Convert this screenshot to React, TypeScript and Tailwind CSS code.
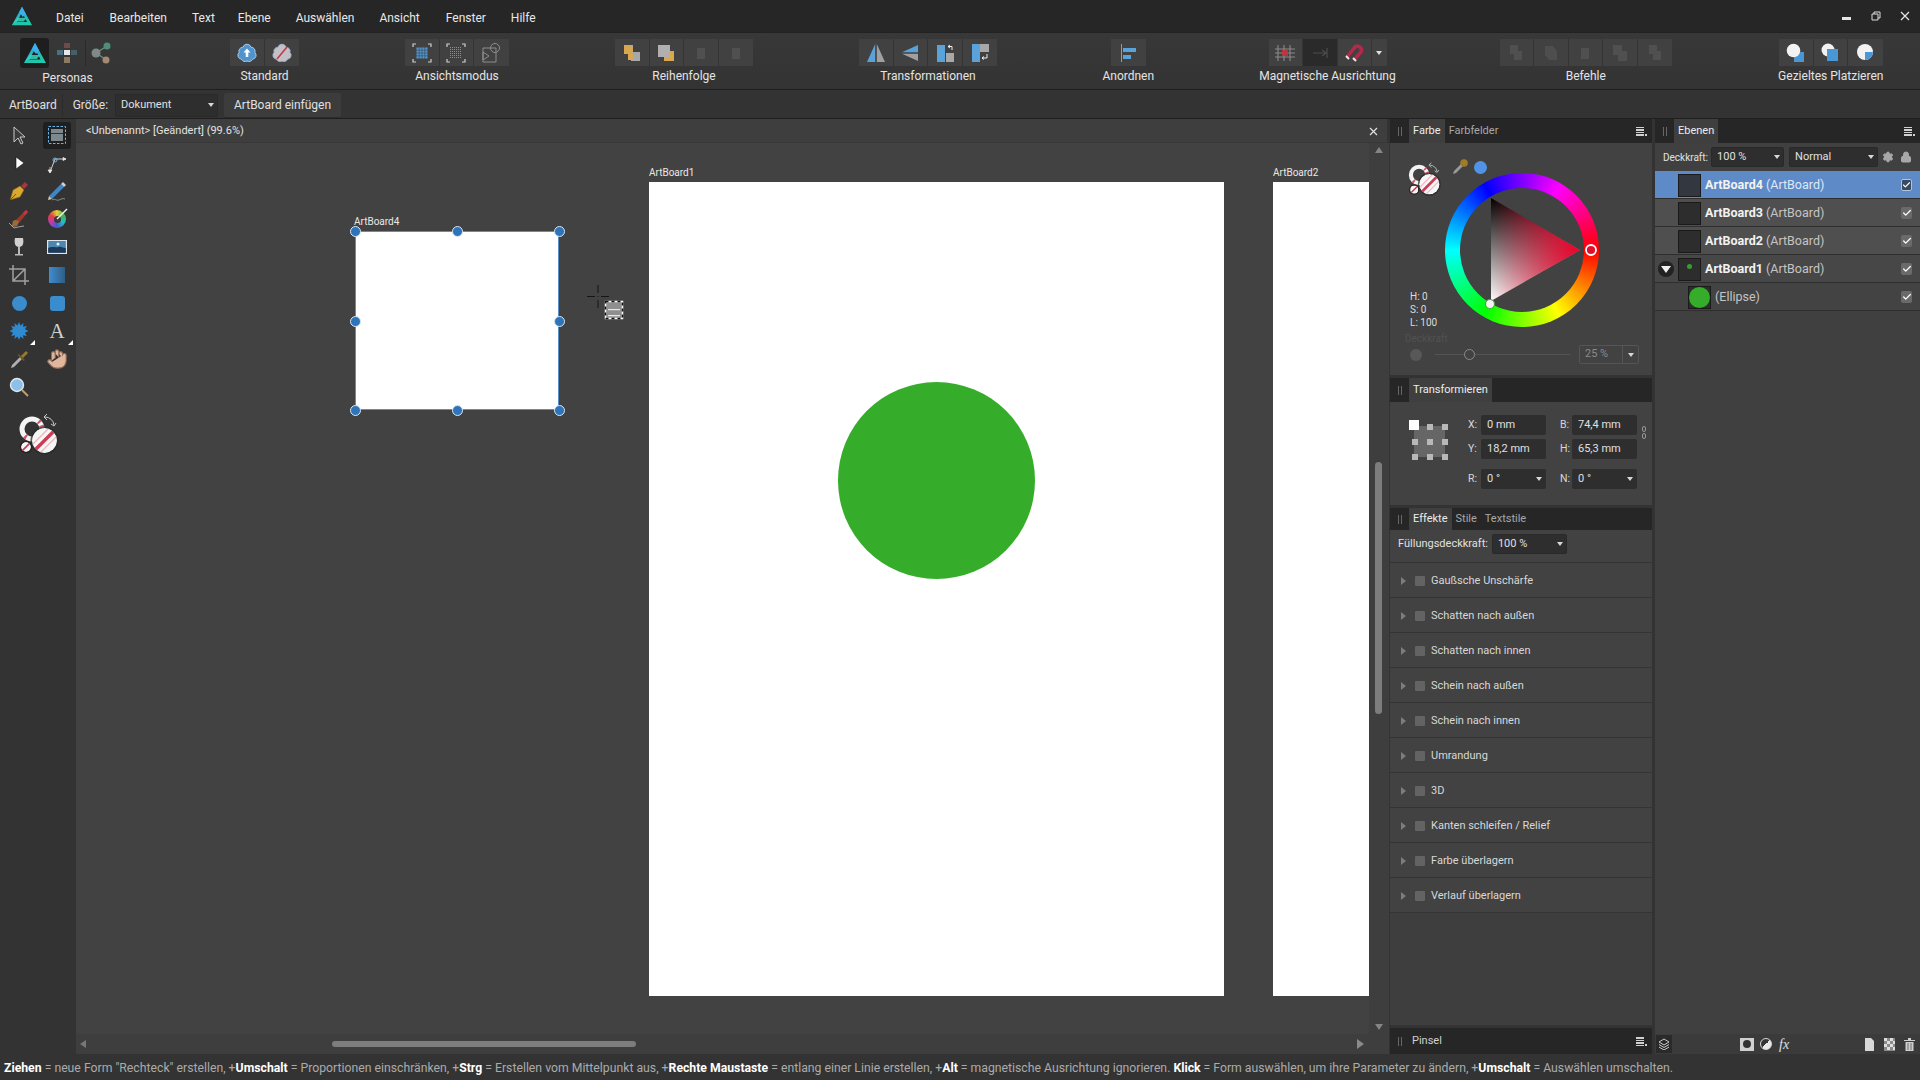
import React from "react";
import { Hand, Settings, Lock, Check } from "lucide-react";

const S = ({ w = 22, h = 22, vb, children, className = "" }: { w?: number; h?: number; vb?: string; children: React.ReactNode; className?: string }) => (
  <svg width={w} height={h} viewBox={vb ?? `0 0 ${w} ${h}`} className={"block shrink-0 " + className}>
    {children}
  </svg>
);

const Logo = ({ size = 24 }: { size?: number }) => (
  <S w={size} h={size} vb="0 0 24 24">
    <defs>
      <linearGradient id="lg" x1="0" y1="0" x2="0.3" y2="1">
        <stop offset="0" stopColor="#2f9de0" />
        <stop offset="1" stopColor="#1fc8a8" />
      </linearGradient>
    </defs>
    <path d="M12 2 L23 22 H1 Z M12 8 L6.5 18.5 H17.5 Z" fill="url(#lg)" fillRule="evenodd" />
    <path d="M1 22 L7 14 H17 L14 18 H6 Z" fill="#36d6c0" opacity="0.85" />
    <path d="M12 2 L16 9.5 L13 13 L9 8 Z" fill="#3ab0ee" />
  </S>
);

const Flower = ({ fill, stroke, children }: { fill: string; stroke: string; children: React.ReactNode }) => (
  <S>
    <path d="M11 2.2a4 4 0 0 1 3.9 3 4 4 0 0 1 4 5.2 4 4 0 0 1-2.3 6.8 4 4 0 0 1-5.6 1.8 4 4 0 0 1-5.6-1.8 4 4 0 0 1-2.3-6.8 4 4 0 0 1 4-5.2 4 4 0 0 1 3.9-3z" fill={fill} stroke={stroke} strokeWidth="1" />
    {children}
  </S>
);

const dotsGrid = (x0: number, y0: number, n: number, step: number, sz: number, c: string) => {
  const out: React.ReactNode[] = [];
  for (let i = 0; i < n; i++)
    for (let j = 0; j < n; j++)
      out.push(<rect key={`${i}-${j}`} x={x0 + i * step} y={y0 + j * step} width={sz} height={sz} fill={c} />);
  return out;
};

const Brackets = () => (
  <path d="M2 5V2H5 M17 2H20V5 M20 17V20H17 M5 20H2V17" fill="none" stroke="#cfcfcf" strokeWidth="1.2" />
);

const Faint = ({ kind = 0 }: { kind?: number }) => (
  <S>
    {kind === 0 && <rect x="7" y="6" width="8" height="11" fill="#505050" />}
    {kind === 1 && <path d="M5 3h8v9h-8z M9 9h8v9h-8z" fill="#505050" />}
    {kind === 2 && <path d="M5 4h8l4 5v9H9l-4-5z" fill="#4e4e4e" />}
    {kind === 3 && <path d="M4 3h9v6h5v10H9v-6H4z" fill="#505050" />}
  </S>
);

const Btn = ({ children, className = "bg-[#414141]", w = "w-[34.5px]" }: { children?: React.ReactNode; className?: string; w?: string }) => (
  <div className={`${w} h-[27px] flex items-center justify-center border-r border-[#343434] last:border-r-0 ${className}`}>{children}</div>
);

const Group = ({ w, ml, label, children }: { w: string; ml: string; label: string; children: React.ReactNode }) => (
  <div className={`${w} ${ml} flex flex-col items-center shrink-0`}>
    <div className="flex h-[27px] mt-[6px] w-full">{children}</div>
    <div className="mt-[2px] h-[16px] leading-[16px] whitespace-nowrap text-[12px] text-[#e4e4e4]">{label}</div>
  </div>
);

const PlaceIcon = ({ v }: { v: number }) => (
  <S>
    {v === 0 && (
      <>
        <rect x="9" y="10" width="10" height="10" fill="#4a97d6" />
        <circle cx="8.5" cy="8.5" r="6.8" fill="#f2f2f2" />
      </>
    )}
    {v === 1 && (
      <>
        <circle cx="9" cy="8" r="6.5" fill="#f2f2f2" />
        <rect x="8" y="7" width="11" height="12" fill="#4a97d6" />
      </>
    )}
    {v === 2 && (
      <>
        <circle cx="11" cy="10" r="8" fill="#f2f2f2" />
        <path d="M11 10h8a8 8 0 0 1-8 8z" fill="#4a97d6" />
      </>
    )}
  </S>
);

const Toolbar = () => (
  <div className="h-[57px] shrink-0 flex bg-gradient-to-b from-[#383838] to-[#333333] border-b border-[#1f1f1f]">
    <div className="w-[95px] ml-[20px] shrink-0 flex flex-col items-center">
      <div className="flex items-center h-[30px] mt-[5px] w-full">
        <div className="w-[30px] h-[30px] rounded-[3px] bg-[#1e1e1e] flex items-center justify-center">
          <Logo size={24} />
        </div>
        <div className="w-[36px] flex justify-center">
          <S>
            <rect x="8" y="1" width="6" height="5" fill="#6f4a4a" />
            <rect x="1" y="8" width="6" height="5" fill="#4a7180" />
            <rect x="8" y="8" width="6" height="5" fill="#e8e8e8" />
            <rect x="15" y="8" width="6" height="5" fill="#46606a" />
            <rect x="8" y="15" width="6" height="6" fill="#8c7a62" />
          </S>
        </div>
        <div className="w-[1px] h-[26px] bg-[#2a2a2a]" />
        <div className="w-[28px] ml-[2px] flex justify-center">
          <S>
            <path d="M6 11L17 4M6 11L15 17" stroke="#6e8f85" strokeWidth="1.2" />
            <circle cx="6" cy="11" r="4.5" fill="#7d8a88" />
            <circle cx="17" cy="4" r="3.5" fill="#4f8f7a" />
            <circle cx="16" cy="18" r="3.5" fill="#a08a72" />
          </S>
        </div>
      </div>
      <div className="mt-[2px] h-[16px] leading-[16px] text-[12px] text-[#e4e4e4]">Personas</div>
    </div>
    <Group w="w-[69px]" ml="ml-[115px]" label="Standard">
      <Btn>
        <Flower fill="#4f93cf" stroke="#a9cde8">
          <path d="M11 6.5l3.5 4h-2.2v4.5h-2.6v-4.5H7.500z" fill="#fff" />
        </Flower>
      </Btn>
      <Btn>
        <Flower fill="#c4c0c8" stroke="#9fb4c8">
          <path d="M6 17L16 5" stroke="#c23a4c" strokeWidth="1.6" />
        </Flower>
      </Btn>
    </Group>
    <Group w="w-[104px]" ml="ml-[106px]" label="Ansichtsmodus">
      <Btn>
        <S>
          <Brackets />
          {dotsGrid(5.5, 5.5, 4, 2.9, 2.3, "#4f98d8")}
        </S>
      </Btn>
      <Btn>
        <S>
          <Brackets />
          {dotsGrid(5, 5, 6, 2, 1, "#5a9ccf")}
        </S>
      </Btn>
      <Btn>
        <S>
          <path d="M3 6h13v14H3z M3 10l6 4-6 4z" fill="none" stroke="#8e8e8e" strokeWidth="1" />
          <circle cx="15" cy="6" r="4.5" fill="none" stroke="#8e8e8e" strokeWidth="1" />
        </S>
      </Btn>
    </Group>
    <Group w="w-[138px]" ml="ml-[106px]" label="Reihenfolge">
      <Btn>
        <S>
          <rect x="3" y="3" width="9" height="9" fill="#d8a850" />
          <rect x="10" y="10" width="9" height="9" fill="#a8a8a8" />
          <rect x="10" y="3" width="2" height="2" fill="#a8a8a8" />
          <rect x="7" y="12" width="5" height="6" fill="#d8a850" />
        </S>
      </Btn>
      <Btn>
        <S>
          <rect x="9" y="9" width="10" height="10" fill="#d8a850" />
          <rect x="3" y="3" width="12" height="12" fill="#b0b0b0" />
        </S>
      </Btn>
      <Btn><Faint /></Btn>
      <Btn><Faint /></Btn>
    </Group>
    <Group w="w-[138px]" ml="ml-[106px]" label="Transformationen">
      <Btn>
        <S>
          <path d="M10.200 2V20H2z" fill="#5aa3da" />
          <path d="M11.800 2V20H20z" fill="#a0a0a0" />
        </S>
      </Btn>
      <Btn>
        <S>
          <path d="M19 3V10.300H3z" fill="#5aa3da" />
          <path d="M19 19V11.700H3z" fill="#a0a0a0" />
        </S>
      </Btn>
      <Btn>
        <S>
          <rect x="3" y="3" width="8" height="17" fill="#5aa3da" />
          <rect x="12" y="11" width="8" height="9" fill="#a8a8a8" />
          <path d="M18 8V4.500H14M14 4.500l2-1.500M14 4.500l2 1.500" fill="none" stroke="#fff" strokeWidth="0.9" />
        </S>
      </Btn>
      <Btn>
        <S>
          <path d="M3 2h8v18H3z" fill="#5aa3da" />
          <path d="M11 2h9v8h-9z" fill="#a8a8a8" />
          <path d="M18 12v4h-5M13 16l2-1.500M13 16l2 1.500" fill="none" stroke="#fff" strokeWidth="0.9" />
        </S>
      </Btn>
    </Group>
    <Group w="w-[34.500px]" ml="ml-[114px]" label="Anordnen">
      <Btn>
        <S>
          <rect x="4" y="2" width="1" height="18" fill="#9a9a9a" />
          <rect x="6" y="6" width="13" height="4" fill="#5aa3da" />
          <rect x="6" y="13" width="8" height="4" fill="#5aa3da" />
        </S>
      </Btn>
    </Group>
    <Group w="w-[118px]" ml="ml-[123px]" label="Magnetische Ausrichtung">
      <Btn>
        <S>
          <path d="M4 3v16M10 3v16M16 3v16M1 7h20M1 11h20M1 15h20" stroke="#8a8a8a" strokeWidth="1.100" />
          <rect x="8" y="8" width="6" height="6" fill="#c8303c" opacity="0.9" />
        </S>
      </Btn>
      <Btn className="bg-[#2a2a2a]">
        <S>
          <path d="M4 11h13M13 8l4 3-4 3M18 6v10" fill="none" stroke="#4c4c4c" strokeWidth="1.200" />
        </S>
      </Btn>
      <Btn>
        <S>
          <path d="M4 15L12 5a4 4 0 0 1 6 5l-7 8" fill="none" stroke="#b02a4a" strokeWidth="3.600" />
          <path d="M3 14l3 3M10 16l3 3" stroke="#e8e8e8" strokeWidth="2" />
        </S>
      </Btn>
      <Btn w="w-[14.500px]">
        <div className="w-0 h-0 border-l-[3.500px] border-r-[3.500px] border-t-[4px] border-l-transparent border-r-transparent border-t-[#e0e0e0]" />
      </Btn>
    </Group>
    <Group w="w-[172.500px]" ml="ml-[113px]" label="Befehle">
      <Btn><Faint kind={1} /></Btn>
      <Btn><Faint kind={2} /></Btn>
      <Btn><Faint kind={0} /></Btn>
      <Btn><Faint kind={3} /></Btn>
      <Btn><Faint kind={1} /></Btn>
    </Group>
    <Group w="w-[103.500px]" ml="ml-[107px]" label="Gezieltes Platzieren">
      <Btn><PlaceIcon v={0} /></Btn>
      <Btn><PlaceIcon v={1} /></Btn>
      <Btn><PlaceIcon v={2} /></Btn>
    </Group>
  </div>
);

const Caret = () => (
  <div className="w-0 h-0 border-l-[3px] border-r-[3px] border-t-[4px] border-l-transparent border-r-transparent border-t-[#d8d8d8]" />
);

const Drop = ({ w, v, className = "h-[20px]", color = "text-[#e0e0e0]" }: { w: string; v: string; className?: string; color?: string }) => (
  <div className={`${w} ${className} bg-[#2e2e2e] rounded-[2px] border border-[#292929] flex items-center justify-between pl-[5px] pr-[3px] text-[11px] shrink-0 ${color}`}>
    <span>{v}</span>
    <Caret />
  </div>
);

const ContextBar = () => (
  <div className="h-[29px] shrink-0 bg-[#333333] flex items-center pt-[2px] border-b border-[#1f1f1f] text-[12px] text-[#e0e0e0]">
    <span className="ml-[9px]">ArtBoard</span>
    <div className="w-[1px] h-[22px] bg-[#2b2b2b] ml-[5px]" />
    <span className="ml-[10px]">Größe:</span>
    <Drop w="w-[103px]" v="Dokument" className="h-[23px] ml-[7px]" />
    <div className="w-[117px] h-[25px] ml-[6px] bg-[#3c3c3c] rounded-[2px] border-b border-[#2c2c2c] flex items-center justify-center">ArtBoard einfügen</div>
  </div>
);

const Stroke = ({ size, id }: { size: number; id: string }) => (
  <S w={size} h={size} vb="0 0 44 44">
    <defs>
      <clipPath id={id + "a"}><circle cx="28.500" cy="28.500" r="12.500" /></clipPath>
      <clipPath id={id + "b"}><circle cx="10" cy="35" r="5" /></clipPath>
    </defs>
    <circle cx="16" cy="17" r="10" fill="none" stroke="#f4f4f4" strokeWidth="5" />
    <circle cx="16" cy="17" r="10" fill="none" stroke="#c9566c" strokeWidth="5" strokeDasharray="2 3 2 3 2 60" transform="rotate(-50 16 17)" />
    <circle cx="16" cy="17" r="10" fill="none" stroke="#c9566c" strokeWidth="5" strokeDasharray="2 60" transform="rotate(125 16 17)" />
    <circle cx="28.500" cy="28.500" r="14" fill="#2b2b2b" opacity="0.75" />
    <g clipPath={`url(#${id}a)`}>
      <circle cx="28.500" cy="28.500" r="12.500" fill="#f6f6f6" />
      <path d="M14 43L43 14" stroke="#cc3c56" strokeWidth="3.400" />
      <path d="M14 35L36 13M22 43L44 21" stroke="#eeb8c2" strokeWidth="1.400" />
    </g>
    <circle cx="10" cy="35" r="6.200" fill="#222" />
    <g clipPath={`url(#${id}b)`}>
      <circle cx="10" cy="35" r="5" fill="#f6f6f6" />
      <path d="M4 41L16 29" stroke="#cc3c56" strokeWidth="1.800" />
    </g>
    <path d="M29 5a9 9 0 0 1 9 8M31 2l-3 3 3 3M35 12l3 2 2-3" fill="none" stroke="#c8c8c8" strokeWidth="1" />
  </S>
);

const toolArrow = (fill: string, stroke: string) => (
  <S>
    <path d="M6 3v15l4-4 3 6 2-1-3-6h5z" fill={fill} stroke={stroke} strokeWidth="1" />
  </S>
);

const Tri = () => (
  <div className="absolute right-[-5px] bottom-[-3px] w-0 h-0 border-b-[5px] border-l-[5px] border-b-white border-l-transparent" />
);

const Tools = () => {
  const rows: [React.ReactNode, React.ReactNode][] = [
    [
      toolArrow("#3a3a3a", "#c8c8c8"),
      <div className="w-[28px] h-[27px] bg-[#1f1f1f] rounded-[3px] flex items-center justify-center">
        <S w={20} h={20}>
          <rect x="4" y="4" width="12" height="12" fill="#7c8a90" />
          <rect x="4" y="8" width="12" height="1" fill="#333" />
          <rect x="1.500" y="1.500" width="17" height="17" fill="none" stroke="#6db3e4" strokeWidth="1" strokeDasharray="2.500 1.500" />
        </S>
      </div>,
    ],
    [
      <S w={18} h={18}><path d="M6 3v12l8-6z" fill="#fff" stroke="#111" strokeWidth="0.6" /></S>,
      <S>
        <path d="M4 20L9 7M9 7H20" stroke="#cfcfcf" strokeWidth="1" fill="none" />
        <circle cx="9" cy="8" r="2" fill="none" stroke="#6db3e4" />
        <path d="M4 15v6M20 7l-3-1.500v3z M4 21l-2-3h4z" fill="#e8e8e8" stroke="#e8e8e8" strokeWidth="0.7" />
      </S>,
    ],
    [
      <S>
        <path d="M2 20l3-10 7-4 4 4-4 7z" fill="#d8a830" stroke="#7a5c18" strokeWidth="0.6" />
        <path d="M2 20l6-6" stroke="#5a4410" strokeWidth="0.8" />
        <path d="M13 6l4-4 3 3-4 4z" fill="#b0313f" />
      </S>,
      <S>
        <path d="M3 16L15 4l3 3L6 19z" fill="#3f86c4" />
        <path d="M15 4l2-2 3 3-2 2z" fill="#d0d0d0" />
        <path d="M3 16l-1 4 4-1z" fill="#e2c9a2" />
        <path d="M6 20c3-2 4 1 7 0s3-2 6-1" fill="none" stroke="#a0a0a0" strokeWidth="0.8" />
      </S>,
    ],
    [
      <S>
        <path d="M8 12L18 2l2 2-9 11z" fill="#9c3a2a" />
        <path d="M18 2l2 2-3 3-2-2z" fill="#c8324a" />
        <path d="M5 13c2-2 5-1 6 1l-2 4c-2 1-5 1-6 0 2-1 1-3 2-5z" fill="#9a6a3c" />
        <path d="M1 15l5 5 4-1 6-1" fill="none" stroke="#bdbdbd" strokeWidth="0.8" />
      </S>,
      <div className="relative w-[18px] h-[18px] rounded-full bg-[conic-gradient(#e8d03a,#3ab84a,#30b8c8,#3a5ed0,#c03ab0,#e04040,#e8d03a)] flex items-center justify-center">
        <div className="w-[7px] h-[7px] rounded-full bg-[#3a3a3a]" />
        <svg width="12" height="12" viewBox="0 0 12 12" className="absolute right-[-2px] top-[-2px]">
          <path d="M1 11L11 1" stroke="#f2f2f2" strokeWidth="1.400" />
        </svg>
      </div>,
    ],
    [
      <S>
        <path d="M7 2h8c1 5 0 9-4 9S6 7 7 2z" fill="#d0d0d0" />
        <rect x="10" y="11" width="2" height="7" fill="#b8b8b8" />
        <rect x="7" y="18" width="8" height="1.500" fill="#b8b8b8" />
      </S>,
      <S>
        <rect x="1" y="4" width="20" height="14" fill="#dfe6ea" />
        <rect x="2.200" y="5" width="17.600" height="11.800" fill="#4d86b0" />
        <path d="M2.200 16.800L2.200 12c4-2 7 0 10-1s5 1 7.600 1v4.800z" fill="#1e3a58" />
        <circle cx="12" cy="8" r="1.500" fill="#e8eef2" />
      </S>,
    ],
    [
      <S>
        <path d="M5 1v16h16M1 5h16v16M5 17L17 5" fill="none" stroke="#a0a0a0" strokeWidth="1.500" />
      </S>,
      <div className="w-[16px] h-[16px] bg-gradient-to-r from-[#3f8ed0] to-[#2f5e84]" />,
    ],
    [
      <div className="w-[15px] h-[15px] rounded-full bg-[#3b8ccc]" />,
      <div className="w-[15px] h-[15px] rounded-[3px] bg-[#3b8ccc]" />,
    ],
    [
      <div className="relative">
        <S>
          <path d="M11 2l1.500 3.500L15.500 3l-.500 3.800 3.800-.800-1.800 3.300 3.500 1.700-3.500 1.700 1.800 3.300-3.800-.800.500 3.800-3-2.500L11 20l-1.500-3.500-3 2.500.500-3.800-3.800.800 1.800-3.300L1.500 11 5 9.300 3.200 6 7 6.800 6.500 3l3 2.500z" fill="#2f8ad0" />
        </S>
        <Tri />
      </div>,
      <div className="relative w-[22px] flex justify-center">
        <span className="text-[21px] leading-[22px] text-[#cfcfcf] font-['Liberation_Serif',serif]">A</span>
        <Tri />
      </div>,
    ],
    [
      <S>
        <path d="M3 20l1-3 9-9 2 2-9 9z" fill="#b0b0b0" />
        <path d="M13 8l5-5 2 2-5 5z" fill="#9a7a28" />
        <path d="M11 6l6 6-1.500 1-6-6z" fill="#6a5420" />
      </S>,
      <Hand size={22} strokeWidth={1.200} color="#8c6a58" fill="#e2b69c" />,
    ],
    [
      <S>
        <circle cx="9" cy="9" r="6.500" fill="#8cc0e8" stroke="#dfe8ee" strokeWidth="1.400" />
        <path d="M14 14l6 6" stroke="#c8a058" strokeWidth="2" />
      </S>,
      null,
    ],
  ];
  return (
    <div className="w-[76px] shrink-0 bg-[#333333] flex flex-col pt-[1px]">
      {rows.map((r, i) => (
        <div key={i} className={`flex ${i === 0 ? "h-[28px] mt-[1px]" : "h-[28px]"}`}>
          <div className="w-[38px] flex items-center justify-center">{r[0]}</div>
          <div className="w-[38px] flex items-center justify-center">{r[1]}</div>
        </div>
      ))}
      <div className="mt-[11px] ml-[16px]">
        <Stroke size={44} id="st1" />
      </div>
    </div>
  );
};

const Handle = ({ cls }: { cls: string }) => (
  <div className={`absolute w-[11px] h-[11px] rounded-full bg-[#2f74b8] border-[1.500px] border-[#d8e8f6] ${cls}`} />
);

const Canvas = () => (
  <div className="flex-1 flex flex-col min-w-0">
    <div className="h-[24px] shrink-0 bg-[#3e3e3e] mr-[2px] flex items-center justify-between pt-[2px] pl-[10px] pr-[9px] text-[11px] text-[#e2e2e2] border-b border-[#383838]">
      <span>&lt;Unbenannt&gt; [Geändert] (99.6%)</span>
      <svg width="9" height="9" viewBox="0 0 9 9" className="block"><path d="M1 1l7 7M8 1L1 8" stroke="#e0e0e0" strokeWidth="1.200" /></svg>
    </div>
    <div className="flex flex-1 min-h-0">
      <div className="flex-1 flex flex-col min-w-0">
        <div className="relative flex-1 bg-[#424242] overflow-hidden">
          <div className="absolute left-[278px] top-[72px] text-[10px] leading-[14px] text-[#e8e8e8]">ArtBoard4</div>
          <div className="absolute left-[573px] top-[23px] text-[10px] leading-[14px] text-[#e8e8e8]">ArtBoard1</div>
          <div className="absolute left-[1197px] top-[23px] text-[10px] leading-[14px] text-[#e8e8e8]">ArtBoard2</div>
          <div className="absolute left-[573px] top-[39px] w-[575px] h-[814px] bg-white flex items-start justify-center">
            <div className="w-[197px] h-[197px] rounded-full bg-[#35ad2a] mt-[200px]" />
          </div>
          <div className="absolute left-[1197px] top-[39px] w-[97px] h-[814px] bg-white" />
          <div className="absolute left-[279px] top-[88px] w-[204px] h-[179px] bg-white border-[1.500px] border-[#5b8fc4]">
            <Handle cls="left-[-6.500px] top-[-6.500px]" />
            <Handle cls="left-[96px] top-[-6.500px]" />
            <Handle cls="right-[-6.500px] top-[-6.500px]" />
            <Handle cls="left-[-6.500px] top-[84px]" />
            <Handle cls="right-[-6.500px] top-[84px]" />
            <Handle cls="left-[-6.500px] bottom-[-6.500px]" />
            <Handle cls="left-[96px] bottom-[-6.500px]" />
            <Handle cls="right-[-6.500px] bottom-[-6.500px]" />
          </div>
          <svg width="44" height="42" viewBox="0 0 44 42" className="absolute left-[511px] top-[142px]">
            <path d="M11 0v8M11 11v1M11 15v8M0 11.500h8M14 11.500h8" stroke="#111" strokeWidth="0.900" />
            <rect x="18.500" y="16.500" width="17" height="17" fill="#8f8f8f" stroke="#fff" strokeWidth="1.500" />
            <rect x="18.500" y="16.500" width="17" height="17" fill="none" stroke="#111" strokeWidth="1.500" strokeDasharray="3 3" />
            <rect x="21" y="24" width="12" height="1.200" fill="#e8e8e8" />
            <rect x="21" y="30" width="12" height="1.200" fill="#e8e8e8" />
          </svg>
        </div>
        <div className="h-[20px] shrink-0 bg-[#3e3e3e] flex items-center">
          <div className="ml-[4px] w-0 h-0 border-y-[4px] border-r-[6px] border-y-transparent border-r-[#787878]" />
          <div className="ml-[246px] w-[304px] h-[6px] rounded-full bg-[#7d7d7d]" />
          <div className="ml-auto mr-[5px] w-0 h-0 border-y-[5px] border-l-[7px] border-y-transparent border-l-[#8a8a8a]" />
        </div>
      </div>
      <div className="w-[20px] shrink-0 bg-[#3e3e3e] flex flex-col items-center relative pr-[1px] pt-[4px]">
        <div className="w-0 h-0 border-x-[4px] border-b-[6px] border-x-transparent border-b-[#858585]" />
        <div className="mt-[309px] w-[7px] h-[252px] rounded-full bg-[#7d7d7d]" />
        <div className="mt-[310px] w-0 h-0 border-x-[4px] border-t-[6px] border-x-transparent border-t-[#858585]" />
      </div>
    </div>
  </div>
);

const PanelMenu = () => (
  <div className="flex items-end gap-[1px]">
    <div className="flex flex-col gap-[1px]">
      <div className="w-[8px] h-[1.500px] bg-[#d0d0d0]" />
      <div className="w-[8px] h-[1.500px] bg-[#d0d0d0]" />
      <div className="w-[8px] h-[1.500px] bg-[#d0d0d0]" />
      <div className="w-[8px] h-[1.500px] bg-[#d0d0d0]" />
    </div>
    <div className="w-[2px] h-[2px] bg-[#d0d0d0]" />
  </div>
);

const Grip = () => (
  <div className="w-[19px] shrink-0 flex justify-center gap-[2px]">
    <div className="w-[1px] h-[9px] bg-[#666]" />
    <div className="w-[1px] h-[9px] bg-[#666]" />
  </div>
);

const TabStrip = ({ tabs, menu = true, h = "h-[24px]" }: { tabs: string[]; menu?: boolean; h?: string }) => (
  <div className={`${h} shrink-0 bg-[#262626] flex items-center pr-[5px] text-[11px]`}>
    <Grip />
    {tabs.map((t, i) => (
      <div key={t} className={`h-full flex items-center px-[4px] ${i === 0 ? "bg-[#3f3f3f] text-[#ececec]" : "text-[#a8a8a8]"}`}>
        {t}
      </div>
    ))}
    {menu && <div className="ml-auto"><PanelMenu /></div>}
  </div>
);

const Farbe = () => (
  <div className="h-[256px] shrink-0 bg-[#424242] flex flex-col">
    <TabStrip tabs={["Farbe", "Farbfelder"]} />
    <div className="relative h-[189px] flex">
      <div className="w-[52px] ml-[16px] shrink-0">
        <div className="mt-[18px]"><Stroke size={36} id="st2" /></div>
        <div className="mt-[93px] ml-[4px] flex flex-col text-[10px] leading-[13px] text-[#dcdcdc]">
          <span>H: 0</span>
          <span>S: 0</span>
          <span>L: 100</span>
        </div>
      </div>
      <div className="relative w-[154px] h-[154px] mt-[30px] -ml-[13px] rounded-full bg-[conic-gradient(from_90deg,#ff0000,#ffff00,#00ff00,#00ffff,#0000ff,#ff00ff,#ff0000)] flex items-center justify-center shrink-0">
        <div className="w-[124px] h-[124px] rounded-full bg-[#424242]" />
        <svg width="154" height="154" viewBox="0 0 154 154" className="absolute left-0 top-0">
          <defs>
            <linearGradient id="tv" x1="0" y1="0" x2="0" y2="1">
              <stop offset="0" stopColor="#000" />
              <stop offset="1" stopColor="#fff" />
            </linearGradient>
            <linearGradient id="th" x1="1" y1="0" x2="0" y2="0">
              <stop offset="0" stopColor="#f0002a" />
              <stop offset="1" stopColor="#f0002a" stopOpacity="0" />
            </linearGradient>
          </defs>
          <path d="M46 25V128L135 77z" fill="url(#tv)" />
          <path d="M46 25V128L135 77z" fill="url(#th)" />
          <circle cx="146" cy="77" r="5" fill="#e0102c" stroke="#fff" strokeWidth="1.800" />
          <circle cx="45" cy="131" r="4.500" fill="#f4f4f4" stroke="#5a9a4a" strokeWidth="1.200" />
        </svg>
      </div>
      <div className="absolute left-[61px] top-[15px]">
        <S w={18} h={18}>
          <path d="M2 16l1-3 7-7 2 2-7 7z" fill="#9a9a9a" />
          <circle cx="13" cy="5" r="3.800" fill="#a07c28" />
        </S>
      </div>
      <div className="absolute left-[84px] top-[18px] w-[13px] h-[13px] rounded-full bg-[#4f94e8]" />
    </div>
    <div className="h-[13px] ml-[15px] text-[10px] leading-[13px] text-[#515151]">Deckkraft</div>
    <div className="h-[19px] flex items-center pl-[20px]">
      <div className="w-[12px] h-[12px] rounded-full bg-[#585858]" />
      <div className="relative ml-[13px] w-[135px] h-[1px] bg-[#545454]">
        <div className="absolute left-[29px] top-[-5px] w-[11px] h-[11px] rounded-full border border-[#8a8a8a] bg-[#424242]" />
      </div>
      <div className="ml-[9px] w-[60px] h-[19px] border border-[#555] rounded-[2px] flex items-center text-[11px] text-[#8a8a8a]">
        <span className="w-[43px] pl-[5px] border-r border-[#555]">25 %</span>
        <div className="flex-1 flex justify-center"><Caret /></div>
      </div>
    </div>
  </div>
);

const Field = ({ l, v, w = "w-[65px]", drop = false, lw = "w-[13px]" }: { l: string; v: string; w?: string; drop?: boolean; lw?: string }) => (
  <div className="flex items-center">
    <span className={`${lw} text-[10.500px] text-[#d8d8d8] shrink-0`}>{l}</span>
    <div className={`${w} h-[20px] bg-[#2e2e2e] rounded-[2px] flex items-center justify-between pl-[6px] pr-[4px] text-[11px] text-[#e0e0e0]`}>
      <span>{v}</span>
      {drop && <Caret />}
    </div>
  </div>
);

const Anchor = () => {
  const pts: [number, number][] = [];
  [0, 15, 30].forEach((y) => [0, 15, 30].forEach((x) => pts.push([x, y])));
  return (
    <S w={42} h={42}>
      <rect x="5" y="6" width="31" height="31" fill="#666" />
      {pts.map(([x, y], i) =>
        i === 0 ? (
          <rect key={i} x="0" y="0" width="10" height="10" fill="#fff" />
        ) : (
          <rect key={i} x={x + 3} y={y + 4} width="6" height="6" fill="#b8b8b8" />
        )
      )}
    </S>
  );
};

const Transform = () => (
  <div className="h-[127px] shrink-0 bg-[#424242] flex flex-col">
    <TabStrip tabs={["Transformieren"]} menu={false} />
    <div className="flex">
      <div className="ml-[19px] mt-[18px]"><Anchor /></div>
      <div className="ml-[17px] mt-[13px] flex flex-col">
        <div className="flex gap-[14px]">
          <Field l="X:" v="0 mm" />
          <Field l="B:" v="74,4 mm" lw="w-[12px]" />
        </div>
        <div className="flex gap-[14px] mt-[4px]">
          <Field l="Y:" v="18,2 mm" />
          <Field l="H:" v="65,3 mm" lw="w-[12px]" />
        </div>
        <div className="flex gap-[14px] mt-[10px]">
          <Field l="R:" v="0 °" drop />
          <Field l="N:" v="0 °" drop lw="w-[12px]" />
        </div>
      </div>
      <div className="ml-[5px] mt-[24px] flex flex-col gap-[1px]">
        <div className="w-[4px] h-[6px] rounded-[2px] border border-[#999]" />
        <div className="w-[4px] h-[6px] rounded-[2px] border border-[#999]" />
      </div>
    </div>
  </div>
);

const effects = ["Gaußsche Unschärfe", "Schatten nach außen", "Schatten nach innen", "Schein nach außen", "Schein nach innen", "Umrandung", "3D", "Kanten schleifen / Relief", "Farbe überlagern", "Verlauf überlagern"];

const Effekte = () => (
  <div className="flex-1 min-h-0 bg-[#424242] flex flex-col">
    <TabStrip tabs={["Effekte", "Stile", "Textstile"]} menu={false} h="h-[22px]" />
    <div className="h-[33px] shrink-0 flex items-center pl-[8px] pb-[4px] border-b border-[#343434] text-[11px] text-[#e0e0e0]">
      <span>Füllungsdeckkraft:</span>
      <Drop w="w-[75px]" v="100 %" className="h-[20px] ml-[4px]" />
    </div>
    {effects.map((e) => (
      <div key={e} className="h-[35px] shrink-0 flex items-center pt-[2px] border-b border-[#343434] text-[11px] text-[#d8d8d8]">
        <div className="ml-[11px] w-0 h-0 border-y-[4px] border-l-[5px] border-y-transparent border-l-[#7d7d7d]" />
        <div className="ml-[9px] w-[10px] h-[10px] bg-[#636363] rounded-[1px]" />
        <span className="ml-[6px]">{e}</span>
      </div>
    ))}
    <div className="flex-1 bg-[#3e3e3e]" />
  </div>
);

const Pinsel = () => (
  <div className="h-[26px] shrink-0 bg-[#262626] flex items-center pt-[1px] pr-[5px] text-[11px] text-[#d0d0d0]">
    <Grip />
    <span className="ml-[3px]">Pinsel</span>
    <div className="ml-auto"><PanelMenu /></div>
  </div>
);

const Layer = ({ name, type, sel, bg, thumb, toggle, indent }: { name?: string; type: string; sel?: boolean; bg: string; thumb?: React.ReactNode; toggle?: boolean; indent?: boolean }) => (
  <div className={`h-[28px] shrink-0 flex items-center pt-[1px] border-b border-[#2e2e2e] ${bg}`}>
    <div className={`${indent ? "w-[33px]" : "w-[23px]"} shrink-0 flex justify-center`}>
      {toggle && (
        <div className="w-[16px] h-[16px] ml-[-2px] rounded-full bg-[#222] flex items-center justify-center">
          <div className="w-0 h-0 mt-[1px] border-x-[5px] border-t-[7px] border-x-transparent border-t-[#f0f0f0]" />
        </div>
      )}
    </div>
    <div className={`w-[23px] h-[23px] border border-[#1a1a1a] flex items-center justify-center ${sel ? "bg-[#33373f]" : "bg-[#2d2d2d]"}`}>{thumb}</div>
    <span className="ml-[4px] mt-[1px] text-[12.500px] whitespace-nowrap">
      {name && <b className="font-bold text-[#f2f2f2]">{name} </b>}
      <span className={sel ? "text-[#dbe8f8]" : "text-[#c4c4c4]"}>{type}</span>
    </span>
    <div className={`ml-auto mr-[8px] w-[11px] h-[12px] rounded-[2px] flex items-center justify-center ${sel ? "bg-[#3a4a60] border border-[#b0c4dc]" : "bg-[#6a6a6a]"}`}>
      <Check size={10} strokeWidth={3} color="#fff" />
    </div>
  </div>
);

const Ebenen = () => (
  <div className="w-[265px] shrink-0 bg-[#404040] flex flex-col">
    <TabStrip tabs={["Ebenen"]} />
    <div className="h-[28px] shrink-0 flex items-center pl-[8px] text-[10px] text-[#e0e0e0]">
      <span>Deckkraft:</span>
      <Drop w="w-[73px]" v="100 %" className="h-[20px] ml-[3px]" />
      <Drop w="w-[89px]" v="Normal" className="h-[20px] ml-[5px]" />
      <div className="ml-[4px]"><Settings size={12} color="#a8a8a8" fill="#a8a8a8" /></div>
      <div className="ml-[6px]"><Lock size={12} color="#a8a8a8" fill="#a8a8a8" /></div>
    </div>
    <div className="flex flex-col flex-1">
      <Layer sel name="ArtBoard4" type="(ArtBoard)" bg="bg-[#5e8ac8]" />
      <Layer name="ArtBoard3" type="(ArtBoard)" bg="bg-[#4f4f4f]" />
      <Layer name="ArtBoard2" type="(ArtBoard)" bg="bg-[#4f4f4f]" />
      <Layer toggle name="ArtBoard1" type="(ArtBoard)" bg="bg-[#474747]" thumb={<div className="w-[5px] h-[5px] rounded-full bg-[#3c9a32] mb-[6px]" />} />
      <Layer indent type="(Ellipse)" bg="bg-[#434343]" thumb={<div className="w-[21px] h-[21px] rounded-full bg-[#35ad2a]" />} />
    </div>
    <div className="h-[20px] shrink-0 bg-[#3b3b3b] flex items-center">
      <div className="w-[16px] h-[18px] ml-[1px] bg-[#2a2a2a] flex items-center justify-center">
        <S w={12} h={12}><path d="M6 1l5 3-5 3-5-3zM1 6.500l5 3 5-3M1 9l5 3 5-3" fill="none" stroke="#c8c8c8" strokeWidth="1" /></S>
      </div>
      <div className="ml-[68px] w-[14px] h-[13px] bg-[#d0d0d0] flex items-center justify-center">
        <div className="w-[8px] h-[8px] rounded-full bg-[#333]" />
      </div>
      <div className="ml-[6px] w-[12px] h-[12px] rounded-full border border-[#d8d8d8] bg-[linear-gradient(135deg,#333_50%,#e8e8e8_50%)]" />
      <span className="ml-[7px] italic text-[14px] leading-[13px] text-[#e0e0e0] font-['Liberation_Serif',serif]">fx</span>
      <div className="ml-auto flex items-center gap-[9px] mr-[5px]">
        <S w={11} h={13}><path d="M1 0h6l3 3v10H1z" fill="#d8d8d8" /></S>
        <S w={11} h={13}><rect width="11" height="13" fill="#8a8a8a" /><path d="M0 0h3v3H0zM6 0h3v3H6zM3 3h3v3H3zM9 3h2v3H9zM0 6h3v3H0zM6 6h3v3H6zM3 9h3v3H3zM9 9h2v3H9z" fill="#dedede" /></S>
        <S w={11} h={13}><path d="M0 2h11v1H0zM4 0h3v2H4zM1.500 4h8v9h-8z" fill="#cfcfcf" /><path d="M4 5v7M7 5v7" stroke="#555" strokeWidth="0.800" /></S>
      </div>
    </div>
  </div>
);

const StatusBar = () => {
  const B = ({ children }: { children: React.ReactNode }) => <b className="font-bold text-white">{children}</b>;
  return (
    <div className="h-[26px] shrink-0 bg-[#333333] flex items-center pl-[4px] pt-[2px] text-[12.240px] text-[#ababab] whitespace-nowrap">
      <span>
        <B>Ziehen</B> = neue Form "Rechteck" erstellen, +<B>Umschalt</B> = Proportionen einschränken, +<B>Strg</B> = Erstellen vom Mittelpunkt aus, +<B>Rechte Maustaste</B> = entlang einer Linie erstellen, +<B>Alt</B> = magnetische Ausrichtung ignorieren. <B>Klick</B> = Form auswählen, um ihre Parameter zu ändern, +<B>Umschalt</B> = Auswählen umschalten.
      </span>
    </div>
  );
};

const menus: [string, string][] = [
  ["Datei", "ml-[23px]"],
  ["Bearbeiten", "ml-[26px]"],
  ["Text", "ml-[25px]"],
  ["Ebene", "ml-[23px]"],
  ["Auswählen", "ml-[25px]"],
  ["Ansicht", "ml-[25px]"],
  ["Fenster", "ml-[26px]"],
  ["Hilfe", "ml-[25px]"],
];

export default function App() {
  return (
    <div className="w-[1920px] h-[1080px] flex flex-col overflow-hidden bg-[#333333] font-['Roboto','Noto_Sans',sans-serif] text-[12px]">
      <div className="h-[33px] shrink-0 bg-[#262626] flex items-center pt-[3px] text-[12px] text-[#e8e8e8] border-b border-[#222]">
        <div className="ml-[11px] -mt-[3px]"><Logo size={22} /></div>
        {menus.map(([m, c]) => (
          <span key={m} className={c}>{m}</span>
        ))}
        <div className="ml-auto flex items-center -mt-[3px]">
          <svg width="9" height="3" className="block mr-[20px] mt-[4px]"><rect width="9" height="3" fill="#e6e6e6" /></svg>
          <svg width="10" height="10" viewBox="0 0 10 10" className="block mr-[19px]"><path d="M3 3V1h6v6H7M1 3h6v6H1z" fill="none" stroke="#dcdcdc" strokeWidth="1" /></svg>
          <svg width="10" height="10" viewBox="0 0 10 10" className="block mr-[10px]"><path d="M1 1l8 8M9 1L1 9" stroke="#e6e6e6" strokeWidth="1.200" /></svg>
        </div>
      </div>
      <Toolbar />
      <ContextBar />
      <div className="flex flex-1 min-h-0">
        <Tools />
        <Canvas />
        <div className="w-[262px] shrink-0 ml-[1px] flex flex-col gap-[3px]">
          <Farbe />
          <Transform />
          <Effekte />
          <Pinsel />
        </div>
        <div className="w-[3px] shrink-0" />
        <Ebenen />
      </div>
      <StatusBar />
    </div>
  );
}
